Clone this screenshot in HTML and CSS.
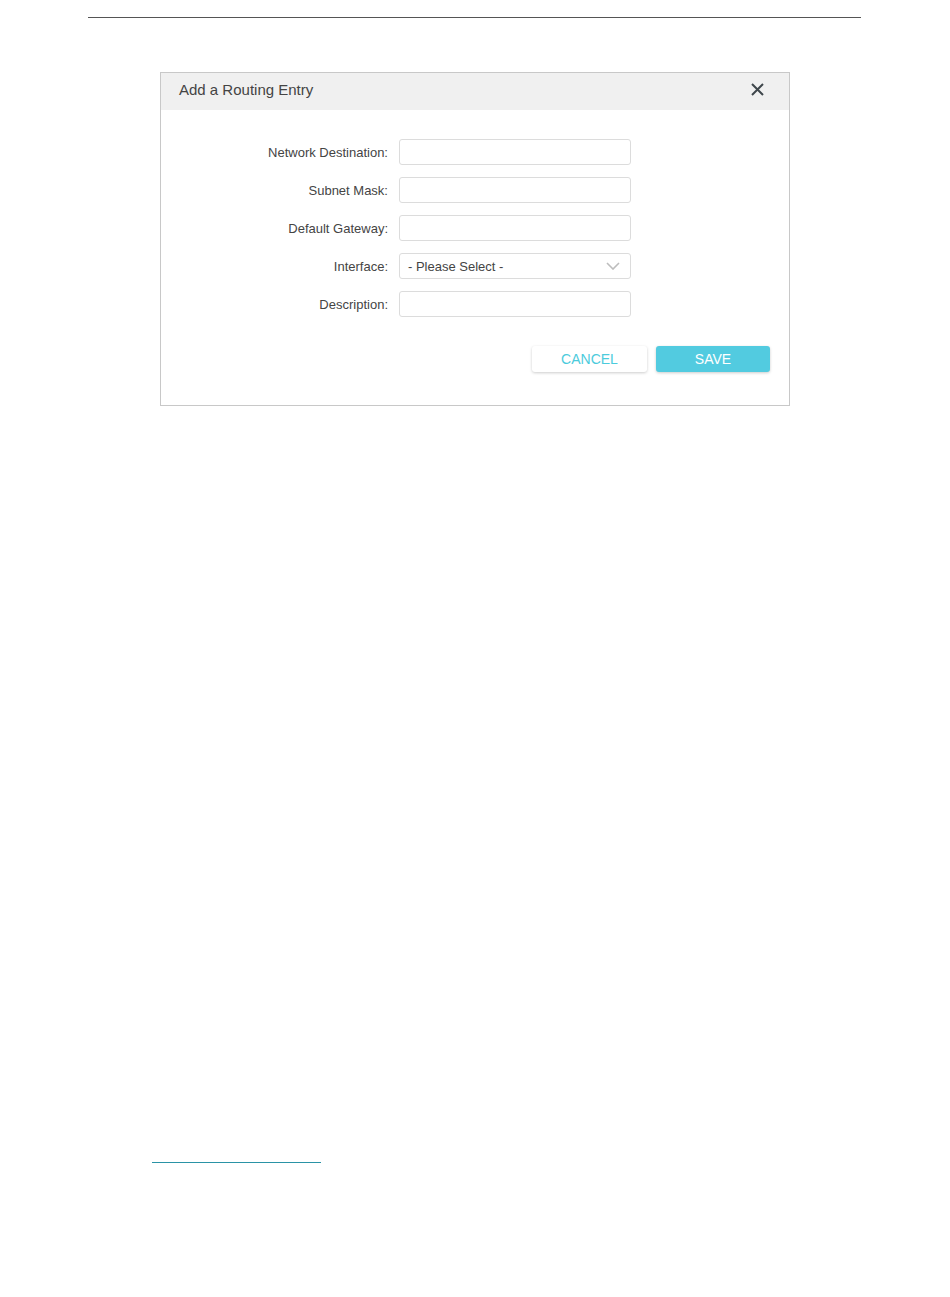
FILE: index.html
```html
<!DOCTYPE html>
<html lang="en">
<head>
  <meta charset="UTF-8" />
  <meta name="viewport" content="width=device-width, initial-scale=1.0"/>
  <title>Add a Routing Entry</title>
  <link rel="stylesheet" href="styles.css">
</head>
<body>

  <div class="top-rule"></div>

  <div class="dialog">
    <div class="dialog-head">
      <span class="dialog-title">Add a Routing Entry</span>
      <button class="close" aria-label="Close">
        <svg width="13" height="13" viewBox="0 0 13 13">
          <path d="M1 1 L12 12 M12 1 L1 12" stroke="#3f474c" stroke-width="2" fill="none"/>
        </svg>
      </button>
    </div>

    <div class="dialog-body">
      <div class="row">
        <label for="dest">Network Destination:</label>
        <input type="text" id="dest"/>
      </div>
      <div class="row">
        <label for="mask">Subnet Mask:</label>
        <input type="text" id="mask"/>
      </div>
      <div class="row">
        <label for="gw">Default Gateway:</label>
        <input type="text" id="gw"/>
      </div>
      <div class="row">
        <label>Interface:</label>
        <div class="select">
          <span>- Please Select -</span>
          <svg width="14" height="8" viewBox="0 0 14 8">
            <path d="M1 1 L7 7 L13 1" stroke="#bdbdbd" stroke-width="1.6" fill="none"/>
          </svg>
        </div>
      </div>
      <div class="row">
        <label for="desc">Description:</label>
        <input type="text" id="desc"/>
      </div>

      <div class="actions">
        <button class="btn btn-cancel">CANCEL</button>
        <button class="btn btn-save">SAVE</button>
      </div>
    </div>
  </div>

  <div class="footnote-rule"></div>

</body>
</html>
```

FILE: styles.css
```css
body {
  margin: 0;
  font-family: "Liberation Sans", Arial, sans-serif;
  background: #fff;
  color: #333;
}

.top-rule {
  margin: 17px 0 0 88px;
  width: 773px;
  border-top: 1px solid #555;
}

.dialog {
  margin: 54px 0 0 160px;
  width: 628px;
  border: 1px solid #c8c8c8;
}

.dialog-head {
  display: flex;
  align-items: center;
  justify-content: space-between;
  box-sizing: border-box;
  height: 37px;
  padding: 0 25px 5px 18px;
  background: #f0f0f0;
}

.dialog-title {
  font-size: 15px;
  color: #444;
}

.close {
  display: flex;
  padding: 0;
  border: none;
  background: none;
  cursor: pointer;
}

.dialog-body {
  padding: 29px 19px 33px 0;
}

.row {
  display: flex;
  align-items: center;
  margin-bottom: 12px;
}

.row label {
  width: 227px;
  margin-right: 11px;
  text-align: right;
  font-size: 13px;
  color: #444;
}

.row input,
.select {
  box-sizing: border-box;
  width: 232px;
  height: 26px;
  border: 1px solid #dcdcdc;
  border-radius: 3px;
  background: #fff;
  font-family: inherit;
  font-size: 13px;
}

.select {
  display: flex;
  align-items: center;
  justify-content: space-between;
  padding: 0 10px 0 8px;
  color: #444;
}

.actions {
  display: flex;
  justify-content: flex-end;
  gap: 9px;
  margin-top: 29px;
}

.btn {
  width: 115px;
  height: 26px;
  border: none;
  border-radius: 3px;
  font-family: inherit;
  font-size: 14px;
  cursor: pointer;
  box-shadow: 0 1px 3px rgba(0, 0, 0, 0.2);
}

.btn-cancel {
  background: #fff;
  color: #4ccbdc;
}

.btn-save {
  width: 114px;
  background: #52cbe0;
  color: #fff;
}

.footnote-rule {
  margin: 756px 0 0 152px;
  width: 169px;
  border-top: 1px solid #2a93a6;
}
```
